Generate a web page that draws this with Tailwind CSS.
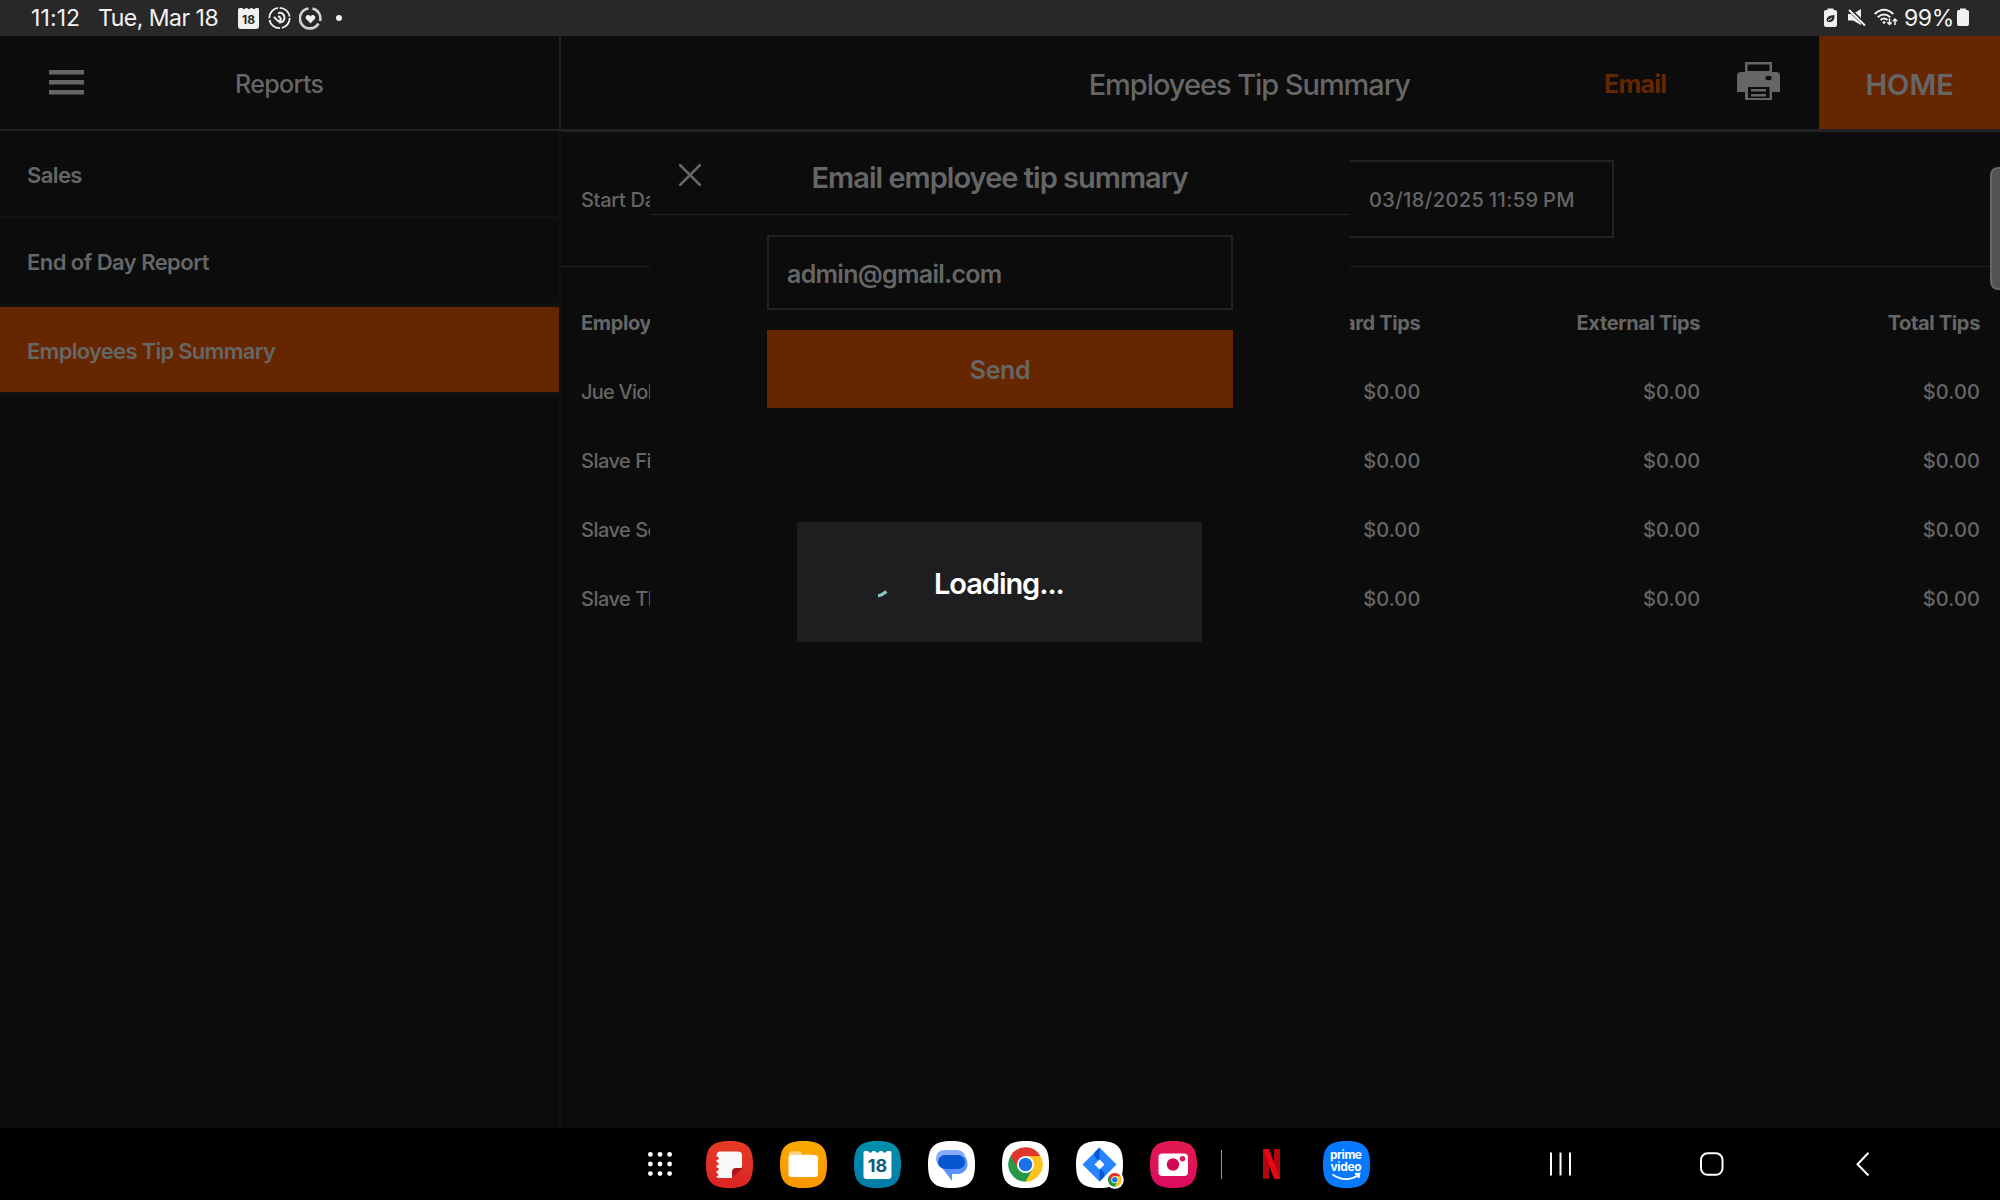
<!DOCTYPE html>
<html lang="en">
<head>
<meta charset="utf-8">
<title>Employees Tip Summary</title>
<script src="https://cdn.jsdelivr.net/npm/@tailwindcss/browser@4"></script>
</head>
<body class="h-[1200px] w-[2000px] overflow-hidden bg-[#0c0c0c] font-['Inter',sans-serif] text-[#666]">
<div class="relative flex h-[1200px] w-[2000px] flex-col">

  <!-- Status bar -->
  <div class="flex h-9 shrink-0 items-center bg-[#282828] pl-[31px] text-[23px] leading-9 text-[#f2f2f2]">
    <span class="w-[67px] tracking-[0.1px] whitespace-nowrap">11:12</span>
    <span class="w-[140px] tracking-[-0.5px] whitespace-nowrap">Tue, Mar 18</span>
    <svg class="h-9 w-[22px]" viewBox="0 0 22 36">
      <path d="M2 8h2.200a2 2 0 0 0 3.600 0h1.400a2 2 0 0 0 3.600 0h1.400a2 2 0 0 0 3.600 0H20q1 0 1 1.500V26q0 3-3 3H3q-3 0-3-3V9.500Q0 8 2 8z" fill="#f0f0f0"/>
      <text x="10.600" y="23.500" text-anchor="middle" font-size="12" font-weight="700" fill="#282828">18</text>
    </svg>
    <svg class="ml-2 h-9 w-[23px]" viewBox="0 0 23 36" fill="none" stroke="#f0f0f0">
      <circle cx="11.500" cy="18" r="10.200" stroke-width="1.800" stroke-dasharray="13.500 1.800 14.500 1.800 14.500 1.800 14.400 1.800"/>
      <path d="M6.500 17.500l3.300 3.200q1.500 1 2.600-.3t-.2-2.700l-1.400-1.300M10.800 13c3-.8 5.700 1.500 5.700 4.800a4.600 4.600 0 0 1-5 4.600" stroke-width="2" stroke-linecap="round"/>
    </svg>
    <svg class="ml-2 h-9 w-[23px]" viewBox="0 0 23 36" fill="none">
      <path d="M13.500 8.500a10 10 0 0 1 7.500 12.500M19.500 23.500A10 10 0 1 1 9.500 8.500" stroke="#d2d2d2" stroke-width="2.600"/>
      <path d="M11.500 23.500 7 18.800c-1.500-2.500 2.500-5.500 4.500-2.400 2-3.100 6-.1 4.500 2.400z" fill="#f0f0f0"/>
    </svg>
    <span class="ml-[14px] h-[6px] w-[6px] rounded-full bg-[#f2f2f2]"></span>
    <div class="ml-auto flex items-center pr-[31px]">
      <svg class="h-9 w-[13px]" viewBox="0 0 13 36">
        <path d="M3.500 8.500h6V10H11q2 0 2 2v13q0 2-2 2H2q-2 0-2-2V12q0-2 2-2h1.500z" fill="#f0f0f0"/>
        <path d="M2.500 20q0-4.500 8-5 .3 7-4.500 7-3.500 0-3.500-2zM2 22.500l3-1.500" fill="#282828"/>
        <path d="m4 20.500 4-2.500" stroke="#f0f0f0"/>
      </svg>
      <svg class="ml-[11px] h-9 w-[18px]" viewBox="0 0 18 36">
        <path d="M0 14h5l8-5v16l-8-4.500H0z" fill="#f0f0f0"/>
        <path d="m0 8.500 18 17" stroke="#282828" stroke-width="4"/>
        <path d="m1 10 16 15.500" stroke="#f0f0f0" stroke-width="2"/>
      </svg>
      <svg class="ml-[8px] h-9 w-6" viewBox="0 0 24 36" fill="none" stroke="#f0f0f0" stroke-width="2">
        <path d="M.7 14q9.300-8.500 18.600 0M3.700 17.200q6.300-5.500 12.600 0M6.500 20q3.500-3 7 0"/>
        <circle cx="10" cy="22.500" r="1" fill="#f0f0f0" stroke-width="1"/>
        <path d="M15.500 18.500v6m-2.200-2.200 2.200 2.200 2.200-2.200M21 25v-6m-2.200 2.200L21 19l2.200 2.200" stroke-width="1.500"/>
      </svg>
      <span class="ml-[6px] w-[53px] tracking-[-0.4px] whitespace-nowrap">99%</span>
      <svg class="h-9 w-3" viewBox="0 0 12 36"><path d="M3 8.500h6V10h1.500Q12 10 12 12v12q0 2-2 2H2q-2 0-2-2V12q0-2 1.500-2H3z" fill="#f0f0f0"/></svg>
    </div>
  </div>

  <div class="flex h-[1092px]">
    <!-- Sidebar -->
    <div class="flex w-[561px] shrink-0 flex-col">
      <div class="flex h-[95px] items-center border-r-2 border-b-2 border-[#222] pl-[49px]">
        <svg class="mb-px h-[26px] w-[36px]" viewBox="0 0 36 26" fill="#666"><path d="M0 1h35v4.500H0zM0 11h35v4.500H0zM0 21h35v4.500H0z"/></svg>
        <span class="ml-[150px] pt-1 text-[25px] font-medium tracking-[-0.65px]">Reports</span>
      </div>
      <div class="flex-1 border-r-2 border-[#11110d] text-[22px] font-semibold tracking-[-0.6px]">
        <div class="flex h-[87px] items-center border-b-2 border-[#11110d] pt-[3px] pl-[27px]">Sales</div>
        <div class="flex h-[89px] items-center border-b-4 border-[#11110d] pt-[3px] pl-[27px] tracking-[-0.55px]">End of Day Report</div>
        <div class="flex h-[89px] items-center border-b-4 border-[#11110d] bg-[#662700] bg-clip-padding pt-[3px] pl-[27px] tracking-[-0.72px]">Employees Tip Summary</div>
      </div>
    </div>

    <!-- Report -->
    <div class="flex flex-1 flex-col">
      <div class="flex h-24 items-stretch border-b-[3px] border-[#222]">
        <div class="flex w-[1044px] items-center justify-end pt-[5px] pr-[195px] text-[29px] font-medium tracking-[-1.05px] whitespace-nowrap">Employees Tip Summary</div>
        <div class="flex w-[132px] items-center pt-[5px] text-[25px] font-bold tracking-[-0.75px] text-[#662700]"><span class="-ml-px">Email</span></div>
        <svg class="mt-[25px] h-[41px] w-[44px]" viewBox="0 0 44 41">
          <path d="M8 1h27v10h4q4 0 4 4v16h-8v8H8v-8H0V15q0-4 4-4h4z" fill="#666"/>
          <path d="M10.500 3.500h22V10h-22zM11 26h21.500v11H11z" fill="#0c0c0c"/>
          <path d="M14 28h15v2.500H14zM14 33h15v2.500H14z" fill="#666"/>
          <ellipse cx="31.500" cy="17" rx="3.200" ry="2.200" fill="#0c0c0c"/>
        </svg>
        <div class="ml-auto flex w-[181px] items-center bg-[#662700] pt-[5px] pl-[46.500px] text-[29px] font-semibold">HOME</div>
      </div>
      <div class="flex h-[135px] items-center border-b border-[#222] pl-5 text-[20px] font-medium">
        <span class="w-[588px] pt-[2px] tracking-[-0.3px]">Start Da</span>
        <div class="mb-px flex h-[78px] w-[445px] items-center justify-end border-2 border-[#222] pt-[2px] pr-[37px] tracking-[0.42px] [word-spacing:-1.200px]">03/18/2025 11:59 PM</div>
      </div>
      <div class="grid grid-cols-5 px-5 pt-[22px] text-right text-[20px] font-medium leading-[69px] tracking-[0.1px]">
        <div class="contents font-bold tracking-[-0.35px]"><span class="text-left">Employ</span><span></span><span>ard Tips</span><span>External Tips</span><span>Total Tips</span></div>
        <div class="contents"><span class="text-left tracking-[-0.75px]">Jue Viol</span><span></span><span>$0.00</span><span>$0.00</span><span>$0.00</span></div>
        <div class="contents"><span class="text-left tracking-[-0.5px]">Slave Fi</span><span></span><span>$0.00</span><span>$0.00</span><span>$0.00</span></div>
        <div class="contents"><span class="text-left tracking-[-0.5px]">Slave Se</span><span></span><span>$0.00</span><span>$0.00</span><span>$0.00</span></div>
        <div class="contents"><span class="text-left tracking-[-0.5px]">Slave Th</span><span></span><span>$0.00</span><span>$0.00</span><span>$0.00</span></div>
      </div>
    </div>
  </div>

  <!-- Dock -->
  <div class="flex h-[72px] items-center bg-black pl-[648px]">
    <svg class="h-6 w-6" viewBox="0 0 24 24" fill="#fff">
      <circle cx="2.400" cy="2.400" r="2.400"/><circle cx="12" cy="2.400" r="2.400"/><circle cx="21.600" cy="2.400" r="2.400"/>
      <circle cx="2.400" cy="12" r="2.400"/><circle cx="12" cy="12" r="2.400"/><circle cx="21.600" cy="12" r="2.400"/>
      <circle cx="2.400" cy="21.600" r="2.400"/><circle cx="12" cy="21.600" r="2.400"/><circle cx="21.600" cy="21.600" r="2.400"/>
    </svg>
    <div class="ml-[34px] flex gap-[27px]">
      <svg class="size-[47px]" viewBox="0 0 47 47">
        <defs><linearGradient id="r" x2="0" y2="1"><stop stop-color="#e63b26"/><stop offset="1" stop-color="#db2424"/></linearGradient>
        <linearGradient id="y" x2="0" y2="1"><stop stop-color="#f9ab00"/><stop offset="1" stop-color="#fa9600"/></linearGradient>
        <linearGradient id="t" x2="0" y2="1"><stop stop-color="#0090aa"/><stop offset="1" stop-color="#007ba8"/></linearGradient>
        <linearGradient id="p" x2="0" y2="1"><stop stop-color="#e21b52"/><stop offset="1" stop-color="#dc0a60"/></linearGradient>
        <path id="sq" d="M23.500 0C41 0 47 6 47 23.500S41 47 23.500 47 0 41 0 23.500 6 0 23.500 0z"/></defs>
        <use href="#sq" fill="url(#r)"/>
        <path d="M14 10.500h18q4 0 4 4V26l-10 11H14q-3 0-4-1.500c3 0 3-3 .5-3.500v-2c3 0 3-3.500 0-3.500v-2c3 0 3-3.500 0-3.500v-2c3 0 3-3.500 0-3.500Q10.500 10.500 14 10.500z" fill="#f8f8f8"/>
        <path d="M26 37v-6q0-4 4-4h7z" fill="#b0141a"/>
      </svg>
      <svg class="size-[47px]" viewBox="0 0 47 47"><use href="#sq" fill="url(#y)"/><path d="M9 20v-7q0-2.500 2.500-2.500h8q2.500 0 2.500 3h10V20z" fill="#fdd48a"/><rect x="8.500" y="14" width="29.500" height="22" rx="3" fill="#fff"/></svg>
      <svg class="size-[47px]" viewBox="0 0 47 47"><use href="#sq" fill="url(#t)"/><path d="M11 10h3a2.300 2.300 0 0 0 4.500 0h2.700a2.300 2.300 0 0 0 4.500 0h2.700a2.300 2.300 0 0 0 4.500 0H36q1.500 0 1.500 2v23q0 3-3 3h-22q-3 0-3-3V12q0-2 1.500-2z" fill="#fff"/><text x="23.600" y="30.500" text-anchor="middle" font-size="18" font-weight="700" fill="#0b5c78">18</text></svg>
      <svg class="size-[47px]" viewBox="0 0 47 47"><use href="#sq" fill="#fff"/><path d="M17 9h12q6 0 8.500 6L14 27Q8 23 8 18q0-9 9-9z" fill="#84abfc"/><path d="M12 24 24 40v-7h7q9-2 8.500-10.500 0-4-2.500-7z" fill="#5b92fb"/><rect x="10" y="14" width="27" height="14" rx="7" fill="#0957d0"/></svg>
      <svg class="size-[47px]" viewBox="0 0 47 47"><use href="#sq" fill="#fff"/>
        <g id="ch"><path d="M23.500 23.500 8.600 14.900A17.200 17.200 0 0 1 38.400 14.900z" fill="#e0352b"/><path d="M23.500 23.500 38.400 14.900A17.200 17.200 0 0 1 23.500 40.700z" fill="#fcc31e"/><path d="M23.500 23.500V40.700A17.200 17.200 0 0 1 8.600 14.900z" fill="#279847"/>
        <path d="M23.500 14.900h14.900l-7.500 12.900z" fill="#fcc31e"/><path d="m16 27.800 7.500 12.900 7.500-12.900z" fill="#279847"/><path d="m31 27.800-7.500 12.900q5 0 8-2.500z" fill="#fcc31e"/><path d="M8.600 14.900 16 27.800l7.500-12.900z" fill="#e0352b"/>
        <circle cx="23.500" cy="23.500" r="8.600" fill="#fff"/><circle cx="23.500" cy="23.500" r="6.800" fill="#1a73e8"/></g>
      </svg>
      <svg class="size-[47px] overflow-visible" viewBox="0 0 47 47"><use href="#sq" fill="#fff"/><path d="M23.500 6.500 40.500 23.500 23.500 40.500 6.500 23.500z" fill="#2684ff"/><path d="m23.500 6.500-5 5q-1 5 5 8V6.500zM23.500 27.500v13l5-5q1-5-5-8z" fill="#0b57cf"/><path d="m23.500 18.500 5 5-5 5-5-5z" fill="#fff"/><circle cx="38.800" cy="38.800" r="9" fill="#fff"/><use href="#ch" transform="translate(29.400 29.400) scale(.4)"/></svg>
      <svg class="size-[47px]" viewBox="0 0 47 47"><use href="#sq" fill="url(#p)"/><rect x="8.500" y="12.500" width="29.500" height="22.500" rx="4" fill="#fff"/><circle cx="23" cy="23.500" r="6.200" fill="#d00a55"/><circle cx="32.500" cy="17.800" r="2.700" fill="#e01850"/></svg>
    </div>
    <div class="ml-[24px] h-[29px] w-px bg-[#9a9a9a]"></div>
    <svg class="ml-[41px] h-[30px] w-[17px]" viewBox="0 0 17 30"><path d="M0 0h6v29.500L0 30zM11 0h6v30l-6-.5z" fill="#b1060f"/><path d="M0 0h6l11 30-6-.6z" fill="#e50914"/></svg>
    <svg class="ml-[43px] size-[47px]" viewBox="0 0 47 47"><use href="#sq" fill="#0779ff"/><g fill="#fff" font-size="12" font-weight="700" text-anchor="middle"><text x="23" y="18" textLength="32">prime</text><text x="23" y="29.500" textLength="31">video</text></g><path d="M9.500 33.500q13 9 26 .5M32 33l4.500-.5-1 4.500" fill="none" stroke="#fff" stroke-width="1.800"/></svg>
    <svg class="ml-[180px] h-6 w-[22px]" viewBox="0 0 22 24" stroke="#fff" stroke-width="2"><path d="M1 .5v23M10.500.5v23M20 .5v23"/></svg>
    <svg class="ml-[128px] h-6 w-6" viewBox="0 0 24 24"><rect x="1" y="1.300" width="21.500" height="21.500" rx="6.500" fill="none" stroke="#fff" stroke-width="2"/></svg>
    <svg class="ml-[132px] h-6 w-[14px]" viewBox="0 0 14 24"><path d="M12.500.8 1.500 12.200l11 11.300" fill="none" stroke="#fff" stroke-width="2"/></svg>
  </div>

  <!-- Email dialog -->
  <div class="absolute top-[132px] left-[650px] flex h-[990px] w-[700px] flex-col items-center bg-[#0c0c0c]">
    <div class="flex h-[83px] w-full items-center border-b border-[#222] pt-[9px] pl-[29px]">
      <svg class="mb-[5px] h-[22px] w-[22px]" viewBox="0 0 22 22"><path d="m1 1 20 20M21 1 1 21" stroke="#666" stroke-width="2.500" stroke-linecap="round"/></svg>
      <span class="ml-[110.500px] text-[29px] font-semibold tracking-[-0.98px] whitespace-nowrap">Email employee tip summary</span>
    </div>
    <div class="mt-5 flex h-[75px] w-[466px] items-center border-2 border-[#222] pt-[4px] pl-[18px] text-[25px] font-semibold tracking-[-0.7px]">admin@gmail.com</div>
    <div class="mt-5 flex h-[78px] w-[466px] items-center justify-center bg-[#662700] pt-[4px] text-[25px] font-semibold tracking-[-0.4px]">Send</div>
  </div>

  <!-- Progress dialog -->
  <div class="absolute top-[522px] left-[797px] flex h-[120px] w-[405px] items-center bg-[#1e1e20] pt-[3px] text-white">
    <svg class="mt-[20px] ml-[80px] h-[9px] w-[12px]" viewBox="0 0 12 9"><path d="M1 7q4-.8 8.500-4.500" fill="none" stroke="#7fcbc4" stroke-width="3"/></svg>
    <span class="ml-[45px] text-[29px] font-semibold tracking-[-1.05px]">Loading...</span>
  </div>

  <!-- Edge panel handle -->
  <div class="absolute top-[167px] left-[1990px] h-[123px] w-[10px] rounded-l-lg border-2 border-r-0 border-[#666] bg-[#535353]"></div>
</div>
</body>
</html>
